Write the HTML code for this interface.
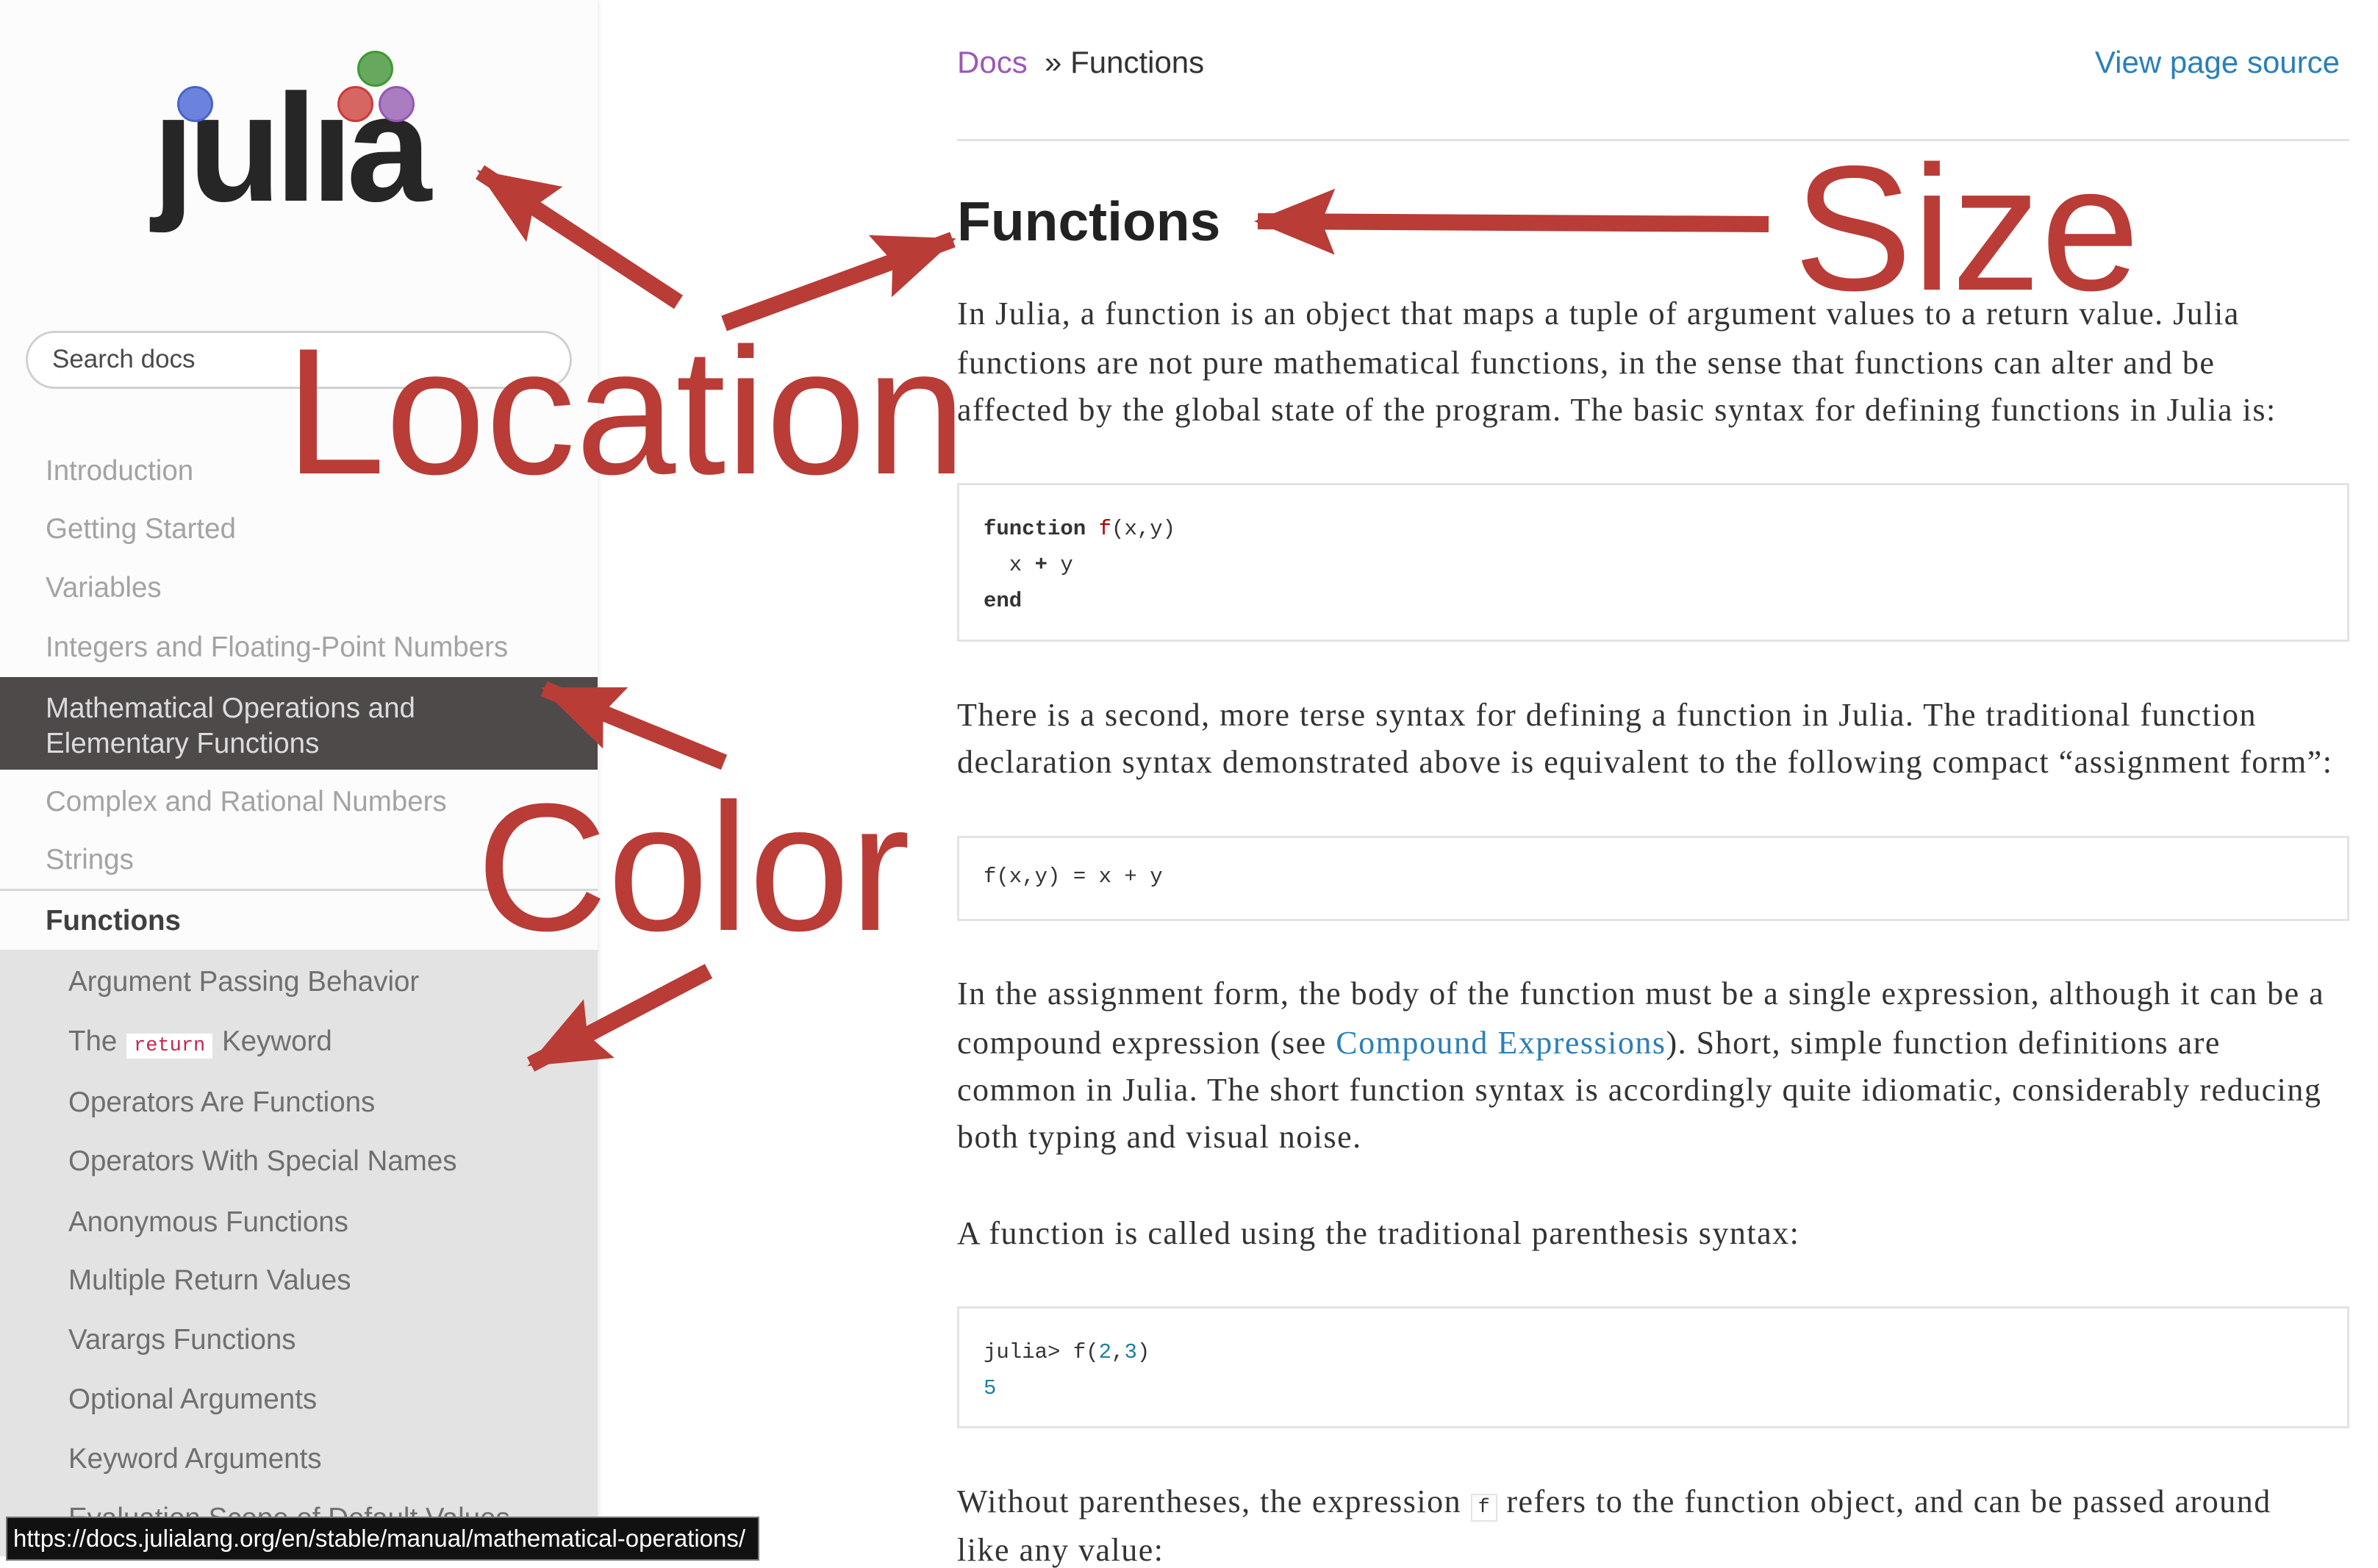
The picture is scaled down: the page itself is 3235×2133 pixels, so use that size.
<!DOCTYPE html>
<html><head><meta charset="utf-8">
<style>
*{margin:0;padding:0;box-sizing:border-box}
body{width:3235px;height:2117px;overflow:hidden;background:#fff;position:relative;font-family:"Liberation Sans",sans-serif}
#side{position:absolute;left:0;top:0;width:813px;height:2117px;background:#fcfcfc;box-shadow:2px 0 6px rgba(0,0,0,.08)}
.abs{position:absolute;white-space:nowrap}
.nav{position:absolute;left:62px;font-size:38.5px;color:#a3a3a3;line-height:44px;white-space:nowrap}
.sub{position:absolute;left:93px;font-size:38.5px;color:#6f6f6f;line-height:44px;white-space:nowrap}
.p{position:absolute;left:1302px;font-family:"Liberation Serif",serif;font-size:44px;letter-spacing:1.5px;color:#333;white-space:nowrap;line-height:44px}
.code{position:absolute;left:1302px;width:1894px;border:3px solid #e1e4e5;background:#fff}
.m{position:absolute;left:1338px;font-family:"Liberation Mono",monospace;font-size:29px;color:#333;white-space:pre;line-height:34px}
</style></head><body>
<div id="side">
  <div style="position:absolute;left:0;top:1292px;width:813px;height:825px;background:#e3e3e3"></div>
  <div style="position:absolute;left:0;top:1209px;width:813px;height:3px;background:#d6d6d6"></div>
  <div class="abs" style="left:207px;top:82px;font-size:208px;font-weight:bold;color:#262626;letter-spacing:-9px;line-height:240px">ȷulıa</div>
  <div style="position:absolute;left:241px;top:117px;width:49px;height:49px;border-radius:50%;background:#6b83dd;border:3px solid #4a63c9"></div>
  <div style="position:absolute;left:486px;top:69px;width:49px;height:49px;border-radius:50%;background:#68a85e;border:3px solid #3d9a32"></div>
  <div style="position:absolute;left:459px;top:117px;width:49px;height:49px;border-radius:50%;background:#d66661;border:3px solid #c93d39"></div>
  <div style="position:absolute;left:515px;top:117px;width:49px;height:49px;border-radius:50%;background:#aa7dc0;border:3px solid #9558b2"></div>
  <div style="position:absolute;left:35px;top:450px;width:743px;height:79px;border:3px solid #d0d0d0;border-radius:40px;background:#fff"></div>
  <div class="abs" style="left:71px;top:469px;font-size:35px;color:#4a4a4a">Search docs</div>
  <div class="nav" style="top:619px">Introduction</div>
  <div class="nav" style="top:698px">Getting Started</div>
  <div class="nav" style="top:778px">Variables</div>
  <div class="nav" style="top:859px">Integers and Floating-Point Numbers</div>
  <div style="position:absolute;left:0;top:921px;width:813px;height:126px;background:#4e4a4a"></div>
  <div class="nav" style="top:940px;color:#dcdcdc;line-height:48px">Mathematical Operations and<br>Elementary Functions</div>
  <div class="nav" style="top:1069px">Complex and Rational Numbers</div>
  <div class="nav" style="top:1148px">Strings</div>
  <div class="nav" style="top:1231px;color:#404040;font-weight:bold">Functions</div>
  <div class="sub" style="top:1314px">Argument Passing Behavior</div>
  <div class="sub" style="top:1395px">The <span style="font-family:'Liberation Mono',monospace;font-size:27px;color:#c7254e;background:#fff;border:2px solid #e1e4e5;padding:2px 10px">return</span> Keyword</div>
  <div class="sub" style="top:1478px">Operators Are Functions</div>
  <div class="sub" style="top:1558px">Operators With Special Names</div>
  <div class="sub" style="top:1641px">Anonymous Functions</div>
  <div class="sub" style="top:1720px">Multiple Return Values</div>
  <div class="sub" style="top:1801px">Varargs Functions</div>
  <div class="sub" style="top:1882px">Optional Arguments</div>
  <div class="sub" style="top:1963px">Keyword Arguments</div>
  <div class="sub" style="top:2044px">Evaluation Scope of Default Values</div>
</div>
<div class="abs" style="left:8px;top:2063px;width:1025px;height:60px;background:#111;border:2px solid #777;color:#fff;font-size:33px;line-height:56px;padding-left:8px">https://docs.julialang.org/en/stable/manual/mathematical-operations/</div>

<div class="abs" style="left:1302px;top:61px;font-size:42px;color:#333"><span style="color:#9b59b6">Docs</span> &nbsp;» Functions</div>
<div class="abs" style="right:52px;top:61px;font-size:42px;color:#2980b9">View page source</div>
<div style="position:absolute;left:1302px;top:189px;width:1894px;height:3px;background:#e1e4e5"></div>
<div class="abs" style="left:1302px;top:258px;font-size:75px;font-weight:bold;color:#222">Functions</div>

<div class="p" style="top:405px">In Julia, a function is an object that maps a tuple of argument values to a return value. Julia</div>
<div class="p" style="top:472px">functions are not pure mathematical functions, in the sense that functions can alter and be</div>
<div class="p" style="top:536px">affected by the global state of the program. The basic syntax for defining functions in Julia is:</div>

<div class="code" style="top:657px;height:216px"></div>
<div class="m" style="top:695px;line-height:49px"><b>function</b> <span style="color:#a00">f</span>(x,y)
  x <b>+</b> y
<b>end</b></div>

<div class="p" style="top:951px">There is a second, more terse syntax for defining a function in Julia. The traditional function</div>
<div class="p" style="top:1015px">declaration syntax demonstrated above is equivalent to the following compact “assignment form”:</div>

<div class="code" style="top:1137px;height:116px"></div>
<div class="m" style="top:1176px">f(x,y) = x + y</div>

<div class="p" style="top:1330px">In the assignment form, the body of the function must be a single expression, although it can be a</div>
<div class="p" style="top:1397px">compound expression (see <span style="color:#2980b9">Compound Expressions</span>). Short, simple function definitions are</div>
<div class="p" style="top:1461px">common in Julia. The short function syntax is accordingly quite idiomatic, considerably reducing</div>
<div class="p" style="top:1525px">both typing and visual noise.</div>
<div class="p" style="top:1656px">A function is called using the traditional parenthesis syntax:</div>

<div class="code" style="top:1777px;height:166px"></div>
<div class="m" style="top:1815px;line-height:49px">julia&gt; f(<span style="color:#1e7fa0">2</span>,<span style="color:#1e7fa0">3</span>)
<span style="color:#1e7fa0">5</span></div>

<div class="p" style="top:2021px">Without parentheses, the expression <span style="font-family:'Liberation Mono',monospace;font-size:27px;letter-spacing:0;border:2px solid #e1e4e5;padding:2px 8px">f</span> refers to the function object, and can be passed around</div>
<div class="p" style="top:2087px">like any value:</div>

<svg style="position:absolute;left:0;top:0" width="3235" height="2117">
<defs><marker id="h" markerUnits="userSpaceOnUse" markerWidth="120" markerHeight="90" refX="105" refY="45" orient="auto"><path d="M0,0 L110,45 L0,90 L18,45 Z" fill="#b93c37"/></marker></defs>
<g stroke="#b93c37" stroke-width="22" fill="none" marker-end="url(#h)">
<line x1="923" y1="411" x2="653" y2="234"/>
<line x1="985" y1="440" x2="1296" y2="326"/>
<line x1="2406" y1="305" x2="1711" y2="301"/>
<line x1="985" y1="1037" x2="740" y2="937"/>
<line x1="964" y1="1321" x2="722" y2="1448"/>
</g>
<g fill="#b93c37" font-family="Liberation Sans, sans-serif">
<text x="388" y="644" font-size="245">Location</text>
<text x="2440" y="394" font-size="242">Size</text>
<text x="648" y="1265" font-size="247">Color</text>
</g>
</svg>
</body></html>
